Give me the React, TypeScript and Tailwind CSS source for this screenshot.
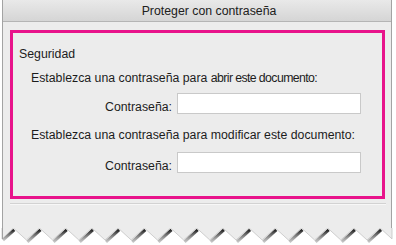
import React from "react";

const PEAK0 = 13.3;
const STEP = 26.2;
const DEPTH = 12;

function TornEdge() {
  // gray sheet with a torn zigzag bottom, drawn from x=2 to x=392
  const pts: [number, number][] = [[2, 0], [2, 11]];
  const slashes: [number, number, number, number][] = [];
  for (let k = 0; k < 16; k++) {
    const peak = PEAK0 + STEP * k;
    const valley = peak + STEP / 2;
    if (peak > 392) break;
    const prevValley = peak - STEP / 2;
    slashes.push([Math.max(prevValley, 2), prevValley < 2 ? DEPTH * (1 - (2 - prevValley) / (STEP / 2)) : DEPTH, peak, 0]);
    pts.push([peak, 0]);
    if (valley <= 392) pts.push([valley, DEPTH]);
    else pts.push([392, DEPTH * ((392 - peak) / (STEP / 2))]);
  }
  pts.push([392, 0]);
  const poly = pts.map(([x, y]) => `${x},${y}`).join(" ");

  return (
    <svg width="396" height="17" viewBox="0 0 396 17" className="block">
      <defs>
        <linearGradient id="sh" x1="0" y1="1" x2="0" y2="0">
          <stop offset="0" stopColor="#8a8a8a" stopOpacity="0.5" />
          <stop offset="1" stopColor="#1e1e1e" stopOpacity="1" />
        </linearGradient>
      </defs>
      {slashes.map(([x1, y1, x2, y2], i) => (
        <line key={i} x1={x1 + 1} y1={y1 + 1.8} x2={x2 + 1} y2={y2 + 1.8} stroke="url(#sh)" strokeWidth="3" />
      ))}
      <polygon points={poly} fill="#ececec" />
      <polyline points={poly} fill="none" stroke="#c4c4c4" strokeWidth="0.8" />
      <line x1="2.5" y1="0" x2="2.5" y2="11" stroke="#a0a0a0" strokeWidth="1" />
    </svg>
  );
}

function PasswordRow({ className }: { className: string }) {
  return (
    <div className={"flex items-center " + className}>
      <span className="w-[159px] text-right pt-[8px]">Contraseña:</span>
      <div className="ml-[5px] w-[184px] h-[21px] bg-white border border-[#c9c9c9]" />
    </div>
  );
}

export default function App() {
  return (
    <div className="w-[396px] h-[245px] bg-white overflow-hidden text-[12.3px] leading-[16px] text-[#1c1c1c]" style={{ fontFamily: '"Liberation Sans", Arial, sans-serif' }}>
      <div className="ml-[2px] w-[390px] h-[228px] bg-[#ececec] border-l border-r border-[#a3a3a3] flex flex-col">
        <div className="h-[22px] shrink-0 bg-gradient-to-b from-[#e9e9e9] to-[#d5d5d5] border-b border-[#b4b4b4] flex items-center justify-center pl-[24px] text-[#202020]">
          Proteger con contraseña
        </div>
        <div className="mt-[8px] ml-[7px] w-[375px] h-[169px] border-[3px] border-[#e8138b] flex flex-col">
          <div className="mt-[13px] ml-[6px]">Seguridad</div>
          <div className="mt-[8px] ml-[18px]">
            Establezca una contraseña para <span className="tracking-[-0.6px]">abrir este documento:</span>
          </div>
          <PasswordRow className="mt-[5px]" />
          <div className="mt-[12px] ml-[18px]">Establezca una contraseña para modificar este documento:</div>
          <PasswordRow className="mt-[7px]" />
        </div>
        <div className="mt-[4px] ml-[7px] w-[376px] h-[2px] border-t border-[#d2d2d2] border-b border-b-[#f7f7f7]" />
      </div>
      <TornEdge />
    </div>
  );
}
